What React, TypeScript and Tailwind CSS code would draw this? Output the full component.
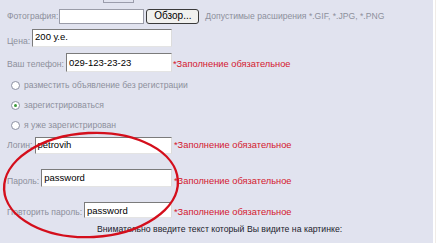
import React from 'react';

const label = 'text-[8.6px] text-[#8d909c] leading-none whitespace-nowrap';
const required = 'text-[9.3px] text-[#d4182e] leading-none whitespace-nowrap';
const inputBox =
  'flex-1 h-full bg-white border border-t-[#7b7b7b] border-l-[#7b7b7b] border-r-[#dcdcdc] border-b-[#e4e4e4] text-[9.5px] text-black leading-none flex pl-[2px] whitespace-nowrap';

const Radio: React.FC<{ checked?: boolean; text: string }> = ({ checked, text }) => (
  <div className="h-[20px] flex items-center pl-[11px] gap-[4px]">
    <span className="w-[9px] h-[9px] rounded-full border border-[#8b90a2] bg-white flex items-center justify-center">
      {checked && <span className="w-[3px] h-[3px] rounded-full bg-[#3c9a3c]" />}
    </span>
    <span className={label}>{text}</span>
  </div>
);

export default function App() {
  return (
    <div className="w-[439px] h-[243px] overflow-hidden bg-white flex font-['Liberation_Sans',Arial,sans-serif]">
      <div className="relative w-[433px] h-full bg-[#e1e3ef] flex flex-col">
        {/* cut-off box at top */}
        <div className="h-[8px] pl-[103px]">
          <div className="w-[31px] h-[3px] border border-t-0 border-[#9a9cab]" />
        </div>

        {/* photo */}
        <div className="h-[16px] flex items-center pl-[7px]">
          <span className={label}>Фотография:</span>
          <div className="ml-[1px] w-[85px] h-[15px] bg-white border border-[#9a9ca8]" />
          <div className="ml-[2px] w-[53px] h-[15px] rounded-[3px] border border-[#3a3a3a] bg-[#f1f1ef] text-[10px] leading-none text-black flex items-center justify-center">
            Обзор...
          </div>
          <span className={`${label} ml-[6px]`}>Допустимые расширения *.GIF, *.JPG, *.PNG</span>
        </div>

        {/* price */}
        <div className="h-[18px] mt-[5px] flex items-center pl-[7px]">
          <div className="w-[165px] h-full flex gap-[2px]">
            <span className={`${label} self-end mb-[1px]`}>Цена:</span>
            <div className={`${inputBox} items-start pt-[2px]`}>200 у.е.</div>
          </div>
        </div>

        {/* phone */}
        <div className="h-[19px] mt-[6px] flex items-center pl-[7px]">
          <div className="w-[165px] h-full flex gap-[2px]">
            <span className={`${label} self-end mb-[3px]`}>Ваш телефон:</span>
            <div className={`${inputBox} items-center`}>029-123-23-23</div>
          </div>
          <span className={`${required} ml-[1px] self-end mb-[3px]`}>*Заполнение обязательное</span>
        </div>

        {/* radios */}
        <div className="mt-[3px] flex flex-col">
          <Radio text="разместить объявление без регистрации" />
          <Radio checked text="зарегистрироваться" />
          <Radio text="я уже зарегистрирован" />
        </div>

        {/* login */}
        <div className="h-[17px] mt-[2px] flex items-center pl-[7px]">
          <div className="w-[165px] h-full flex gap-[2px]">
            <span className={`${label} self-end mb-[4px]`}>Логин:</span>
            <div className={`${inputBox} items-start pt-[2px]`}>petrovih</div>
          </div>
          <span className={`${required} ml-[2px] self-end mb-[4px]`}>*Заполнение обязательное</span>
        </div>

        {/* password */}
        <div className="h-[18px] mt-[15px] flex items-center pl-[7px]">
          <div className="w-[165px] h-full flex gap-[2px]">
            <span className={`${label} self-end mb-[1px]`}>Пароль:</span>
            <div className={`${inputBox} items-start pt-[3px]`}>password</div>
          </div>
          <span className={`${required} ml-[2px] self-end mb-[1px]`}>*Заполнение обязательное</span>
        </div>

        {/* repeat password */}
        <div className="h-[16px] mt-[15px] flex items-center pl-[7px]">
          <div className="w-[165px] h-full flex gap-[2px]">
            <span className={`${label} self-end mb-[1px]`}>Повторить пароль:</span>
            <div className={`${inputBox} items-start pt-[3px]`}>password</div>
          </div>
          <span className={`${required} ml-[2px] self-end mb-[1px]`}>*Заполнение обязательное</span>
        </div>

        {/* captcha hint */}
        <div className="mt-[7px] pl-[97px] text-[8.7px] leading-none text-[#1c1c2c] whitespace-nowrap">
          Внимательно введите текст который Вы видите на картинке:
        </div>

        {/* red annotation ellipse */}
        <svg className="absolute left-0 top-0 pointer-events-none" width="433" height="243" viewBox="0 0 433 243">
          <ellipse
            cx="91"
            cy="185"
            rx="87"
            ry="52"
            transform="rotate(-3 91 185)"
            fill="none"
            stroke="#d40f1c"
            strokeWidth="2.4"
          />
        </svg>
      </div>
      <div className="w-[2px]" />
      <div className="w-px h-full bg-[#f0ece8]" />
    </div>
  );
}
